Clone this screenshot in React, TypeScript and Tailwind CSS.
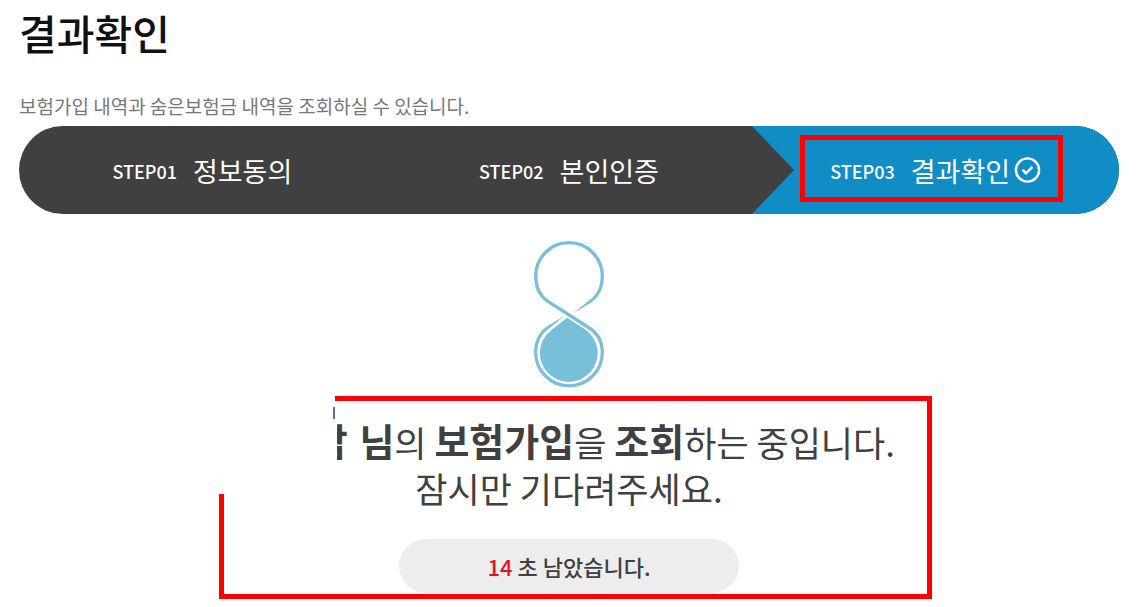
import type { ReactNode } from 'react';

interface StepProps {
  no: string;
  label: string;
  active?: boolean;
  children?: ReactNode;
}

function Step({ no, label, active, children }: StepProps) {
  return (
    <li
      className={
        active
          ? 'relative flex items-center justify-center bg-[#108dc4] text-white'
          : 'relative flex items-center justify-center text-white'
      }
      aria-current={active ? 'step' : undefined}
    >
      <span className="mr-4 pt-[2px] text-[18px] font-medium">{no}</span>
      <strong className="pt-[2px] text-[27px] font-normal">{label}</strong>
      {children}
    </li>
  );
}

function CheckIcon() {
  return (
    <svg className="ml-1 h-[27px] w-[27px]" viewBox="0 0 27 27" fill="none" stroke="white">
      <circle cx="13.5" cy="13" r="11.6" strokeWidth="2.4" />
      <path d="M8.6 12.9l3.4 3.5 6.4-6.6" strokeWidth="2.4" />
    </svg>
  );
}

function Hourglass() {
  return (
    <svg className="h-[148px] w-[72px]" viewBox="0 0 72 148" fill="none">
      <path
        d="M69.3 36A33.3 33.3 0 0 0 2.7 36C2.7 47 7 56 15 61.5L55.500 87.500C64.500 93 69.3 102 69.3 112.5A33.3 33.3 0 0 1 2.7 112.5"
        stroke="#7abfd8"
        strokeWidth="3.3"
      />
      <path d="M71 36C71 48 66 57.500 57.500 63.1L40.3 73.2 55 61.200C64 55 67.6 47 67.6 36z" fill="#7abfd8" />
      <path d="M1 112.500C1 101 6 91.500 14.500 86L31.7 75.800 17 87.800C8 94 4.400 102 4.400 112.500z" fill="#7abfd8" />
      <path d="M34.3 77.7L53.500 90.200A28.9 28.9 0 1 1 18 90.200z" fill="#7abfd8" />
    </svg>
  );
}

export default function App() {
  return (
    <main className="overflow-hidden bg-white pt-[6px] pr-5 pl-[19px] font-['Noto_Sans_CJK_KR','Noto_Sans_KR',sans-serif] text-[#404040]">
      <h1 className="text-[41px] leading-[52px] font-medium text-[#111]">결과확인</h1>
      <p className="mt-[34px] text-[19px] leading-[28px] text-[#777]">
        보험가입 내역과 숨은보험금 내역을 조회하실 수 있습니다.
      </p>

      <ol className="mt-[6px] grid h-[88px] grid-cols-3 overflow-hidden rounded-full bg-[#404040]">
        <Step no="STEP01" label="정보동의" />
        <Step no="STEP02" label="본인인증" />
        <Step no="STEP03" label="결과확인" active>
          <CheckIcon />
          <svg className="absolute top-0 left-0 h-[88px] w-[42px]" viewBox="0 0 42 88">
            <path d="M0 0L42 44 0 88z" fill="#404040" />
          </svg>
          <span className="absolute top-[9px] left-12 h-[67px] w-[263px] border-5 border-[#f00]" />
        </Step>
      </ol>

      <section className="relative mx-auto flex w-[700px] flex-col items-center pt-[26px] pb-[14px]">
        <Hourglass />

        {/* red frame, upper left part is covered */}
        <div className="absolute top-[182px] left-0 h-[203px] w-[713px] border-5 border-[#f00]">
          <div className="absolute -top-[5px] -left-[5px] h-[98px] w-[116px] bg-white" />
          <div className="absolute top-[6px] left-[109px] h-3 w-[2px] bg-[#4f73b3]" />
        </div>

        <p className="relative mt-[31px] flex h-[46px] items-start self-end pr-6 text-[35px] leading-[46px] whitespace-pre">
          <b className="mr-[3px] flex w-[11px] justify-end overflow-hidden text-[38px] leading-[42px]">남</b>
          <b className="text-[38px] leading-[42px]"> 님</b>의{' '}
          <b className="text-[38px] leading-[42px]">보험가입</b>을{' '}
          <b className="text-[38px] leading-[42px]">조회</b>하는 중입니다.
        </p>
        <p className="relative text-[35px] leading-[46px]">잠시만 기다려주세요.</p>

        <p className="relative mt-7 flex h-[54px] w-[340px] items-center justify-center rounded-full bg-[#ededed] text-[22px] font-medium whitespace-pre">
          <span className="text-[#e6141e]">14</span> 초 남았습니다.
        </p>
      </section>
    </main>
  );
}
